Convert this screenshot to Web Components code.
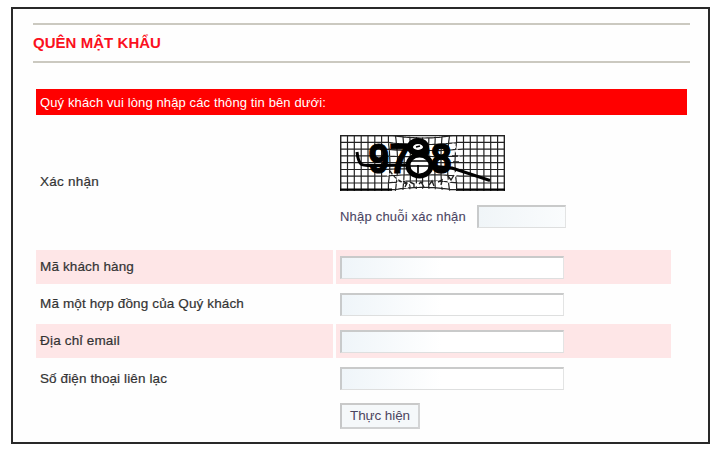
<!DOCTYPE html>
<html lang="vi"><head><meta charset="utf-8"><title>Quên mật khẩu</title>
<style>html,body{margin:0;background:#fff;font-family:"Liberation Sans",Arial,sans-serif}</style></head>
<body><password-form></password-form>
<script>
const define=(name,html,init)=>customElements.define(name,class extends HTMLElement{
  connectedCallback(){
    if(this.shadowRoot)return;
    this.attachShadow({mode:'open'}).innerHTML=html;
    if(init)init(this);
  }
});

/* A line of text whose tracking is adjusted to a given width. */
define('fit-text',`<style>:host{display:inline-block;white-space:nowrap;line-height:18px}span{display:inline-block}</style><span><slot></slot></span>`,el=>{
  const s=el.shadowRoot.querySelector('span'),n=[...el.textContent].length;
  s.style.letterSpacing=((+el.getAttribute('width')-s.getBoundingClientRect().width)/n)+'px';
});

define('text-field',`<style>:host{display:block;box-sizing:border-box;width:224px;height:23px;border:2px solid;border-color:#c9caca #e3e4e4 #dedfdf #c8cacb;border-right-width:1px;border-bottom-width:1px;background:linear-gradient(90deg,#eff5f9,#fff 45%)}:host([small]){width:89px;background:linear-gradient(90deg,#f0f5f8,#fafcfd)}
input{box-sizing:border-box;display:block;width:100%;height:100%;border:0;padding:0 3px;background:none;outline:0}</style><input>`);

define('submit-button',`<style>:host{display:block}button{box-sizing:border-box;display:block;width:80px;height:26px;padding:0;border:2px solid;border-color:#c9c9c9 #d3d4d5 #d0d1d2 #c6c7c8;background:#f5f8fa;color:#4c4560;font:13.5px/18px "Liberation Sans",Arial,sans-serif;-webkit-text-stroke:0}</style><button><slot></slot></button>`);

define('form-row',`<style>:host{display:grid;grid-template-columns:297px 335px;gap:3px;height:34px;color:#333;font-size:13.5px;-webkit-text-stroke:.2px}
div{display:flex;align-items:center;padding-left:4px;background:var(--row,transparent)}:host([tinted]){--row:#fee6e7}
:host([tall]){height:134px}:host([tall]) .v{align-items:flex-start}:host([last]){height:32px}</style><div class="l"><slot name="label"></slot></div><div class="v"><slot></slot></div>`);

define('captcha-image',`<style>:host,svg{display:block;-webkit-text-stroke:0}svg{overflow:visible}text{font:bold 43px "Liberation Sans",Arial,sans-serif;stroke:#000;stroke-width:1.2}</style>
<svg width="165" height="56" viewBox="0 0 165 56"><rect width="165" height="56" fill="#fff"/>
<g id="g" fill="none" stroke="#222" stroke-width="1.2"></g>
<g fill="none" stroke="#fff" stroke-width="3"><path d="M46 36Q53 48 68 52M101 51Q116 44 120 30" stroke-dasharray="5 3"/><path d="M56 42Q66 50 80 50T105 44" stroke-dasharray="4 3"/><path d="M112 9Q120 18 118 28" stroke-dasharray="5 2"/></g>
<g fill="none" stroke="#222" stroke-width="1.4"><path d="M50 36Q57 47 70 50" stroke-dasharray="4 2"/><path d="M63 46l4 2l-2 4M70 47l4 2v4M79 49l2-2l3 5M89 50l3-4l2 5M98 47l4-2l-1 5M108 41l3 4l3-5M112 21h6M113 27h6"/></g>
<path d="M.6 55V.6H164.4V55" fill="none" stroke="#222" stroke-width="1.2"/><path d="M0 54.7H52M117 54.7H165" stroke="#000" stroke-width="2.2"/>
<path d="M17 17Q18 26 21 29Q23 31 37 30.5L78 30L112 33L150 45.5" fill="none" stroke="#000" stroke-width="3"/>
<text x="28.5" y="38" textLength="83" lengthAdjust="spacingAndGlyphs">9788</text>
<ellipse cx="79.5" cy="30.5" rx="11.5" ry="10.5" fill="#fff" stroke="#000" stroke-width="5"/><ellipse cx="78" cy="12" rx="8" ry="6" fill="#fff" stroke="#000" stroke-width="6"/>
<path d="M71 26h17M69 31h21M78 30v8M76 12l4 -1" stroke="#000" stroke-width="1.7"/></svg>`,el=>{
  /* Square grid, mildly bent around a lens in the middle. */
  const bend=(x,y)=>{const dx=x-83,dy=y-28,r=Math.hypot(dx,dy),f=r<40?1-.1*Math.sin(Math.PI*r/40):1;return (83+dx*f).toFixed(1)+' '+(28+dy*f).toFixed(1)};
  let d='';
  for(let x=.7;x<165;x+=6.82){for(let y=0;y<=56;y+=2)d+=(y?'L':'M')+bend(x,y)}
  for(let y=.7;y<56;y+=6.75){for(let x=0;x<=165;x+=2.5)d+=(x?'L':'M')+bend(x,y)}
  el.shadowRoot.querySelector('#g').innerHTML='<path d="'+d+'"/>';
});

define('section-title',`<style>:host{display:flex;box-sizing:border-box;height:40px;align-items:center;border:solid #cbc9c0;border-width:2px 0;color:#fb1020;font-size:15px;font-weight:bold}</style><slot></slot>`);
define('notice-bar',`<style>:host{display:flex;box-sizing:border-box;width:651px;height:26px;align-items:center;padding:1px 0 0 4px;background:#f00;color:#fff;font-size:13px}</style><slot></slot>`);

define('password-form',`<style>
:host{display:block;box-sizing:border-box;width:720px;height:454px;padding:7px 10px 10px 11px}
main{box-sizing:border-box;width:699px;height:437px;border:2px solid #292929;background:#fefefe;padding:14px 18px 0 20px}
.body{padding:26px 0 0 3px}.cap{padding-top:20px}.code{display:flex;align-items:center;gap:11px;padding-top:14px;color:#4b4563;font-size:13px;-webkit-text-stroke:.1px}
.rows{display:grid;grid-template-rows:135px 34px 40px 34px 41px 34px}.rows form-row{align-self:center}.rows form-row[tall]{align-self:start}</style>
<main><section-title><fit-text width="128">QUÊN MẬT KHẨU</fit-text></section-title>
<div class="body"><notice-bar><fit-text width="286">Quý khách vui lòng nhập các thông tin bên dưới:</fit-text></notice-bar>
<div class="rows">
<form-row tall><fit-text slot="label" width="59">Xác nhận</fit-text><div class="cap"><captcha-image></captcha-image><div class="code"><fit-text width="126">Nhập chuỗi xác nhận</fit-text><text-field small></text-field></div></div></form-row>
<form-row tinted><fit-text slot="label" width="94">Mã khách hàng</fit-text><text-field></text-field></form-row>
<form-row><fit-text slot="label" width="204">Mã một hợp đồng của Quý khách</fit-text><text-field></text-field></form-row>
<form-row tinted><fit-text slot="label" width="80">Địa chỉ email</fit-text><text-field></text-field></form-row>
<form-row><fit-text slot="label" width="127">Số điện thoại liên lạc</fit-text><text-field></text-field></form-row>
<form-row last><span slot="label"></span><submit-button><fit-text width="60">Thực hiện</fit-text></submit-button></form-row>
</div></div></main>`);
</script></body></html>
